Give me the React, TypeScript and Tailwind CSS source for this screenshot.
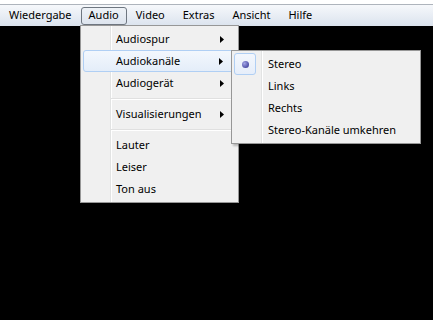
import React from 'react';

type Entry = { label: string; arrow?: boolean; active?: boolean } | 'sep';

const MAIN_MENU: Entry[] = [
  { label: 'Audiospur', arrow: true },
  { label: 'Audiokanäle', arrow: true, active: true },
  { label: 'Audiogerät', arrow: true },
  'sep',
  { label: 'Visualisierungen', arrow: true },
  'sep',
  { label: 'Lauter' },
  { label: 'Leiser' },
  { label: 'Ton aus' },
];

const CHANNELS = ['Stereo', 'Links', 'Rechts', 'Stereo-Kanäle umkehren'];

const BAR_ITEMS = ['Wiedergabe', 'Audio', 'Video', 'Extras', 'Ansicht', 'Hilfe'];

function Arrow() {
  return (
    <svg width="4" height="7" viewBox="0 0 4 7" className="ml-auto mr-[12px] shrink-0">
      <path d="M0 0 L4 3.5 L0 7 Z" fill="#000" />
    </svg>
  );
}

// the vertical icon gutter line of a Win7 menu
function Gutter() {
  return <div className="absolute left-[29px] top-0 bottom-0 w-[2px] border-l border-[#e2e3e3] bg-white" />;
}

function MainMenu() {
  return (
    <div className="absolute left-[80px] top-[25px] w-[159px] border border-[#979797] bg-[#f0f0f0] py-[2px] shadow-[2px_2px_2px_rgba(0,0,0,0.25)]">
      <Gutter />
      {MAIN_MENU.map((e, i) =>
        e === 'sep' ? (
          <div key={i} className="relative h-[9px] pl-[30px] pr-[2px] pt-[4px]">
            <div className="h-px bg-[#e0e0e0]" />
            <div className="h-px bg-white" />
          </div>
        ) : (
          <div
            key={i}
            className={
              'relative mx-[2px] flex h-[22px] items-center rounded-[3px] ' +
              (e.active
                ? 'border border-[#b0cff4] bg-gradient-to-b from-[#f3f7fd] to-[#e4edf9] pl-[32px]'
                : 'pl-[33px]')
            }
          >
            <span>{e.label}</span>
            {e.arrow && <Arrow />}
          </div>
        )
      )}
    </div>
  );
}

function ChannelMenu() {
  return (
    <div className="absolute left-[231px] top-[50px] w-[190px] border border-[#979797] bg-[#f0f0f0] py-[2px] shadow-[2px_2px_2px_rgba(0,0,0,0.25)]">
      <Gutter />
      {CHANNELS.map((c, i) => (
        <div key={c} className="relative mx-[2px] flex h-[22px] items-center gap-[12px]">
          {i === 0 ? (
            <div className="flex h-[22px] w-[22px] items-center justify-center rounded-[3px] border border-[#b0cff4] bg-gradient-to-b from-[#f3f7fd] to-[#e6eefa]">
              <div className="h-[7px] w-[7px] rounded-full bg-[radial-gradient(circle_at_35%_35%,#a3a6e6,#2b2c8c)]" />
            </div>
          ) : (
            <div className="w-[22px]" />
          )}
          <span>{c}</span>
        </div>
      ))}
    </div>
  );
}

export default function App() {
  return (
    <div
      className="relative h-[320px] w-[433px] overflow-hidden bg-black text-[11px] text-black"
      style={{ fontFamily: '"Noto Sans", "Liberation Sans", sans-serif' }}
    >
      <div className="h-[4px] bg-white" />
      <div className="h-px bg-[#aeb4bc]" />
      <div className="flex h-[21px] items-center bg-gradient-to-b from-[#f6f8fb] to-[#dbe3ee]">
        {BAR_ITEMS.map((t) =>
          t === 'Audio' ? (
            <div
              key={t}
              className="flex h-[18px] items-center rounded-[3px] border border-[#6e7680] bg-gradient-to-b from-[#eef2f7] to-[#dde4ee] px-[7px]"
            >
              {t}
            </div>
          ) : (
            <div key={t} className="flex h-[18px] items-center px-[9px]">
              {t}
            </div>
          )
        )}
      </div>
      <MainMenu />
      <ChannelMenu />
    </div>
  );
}
